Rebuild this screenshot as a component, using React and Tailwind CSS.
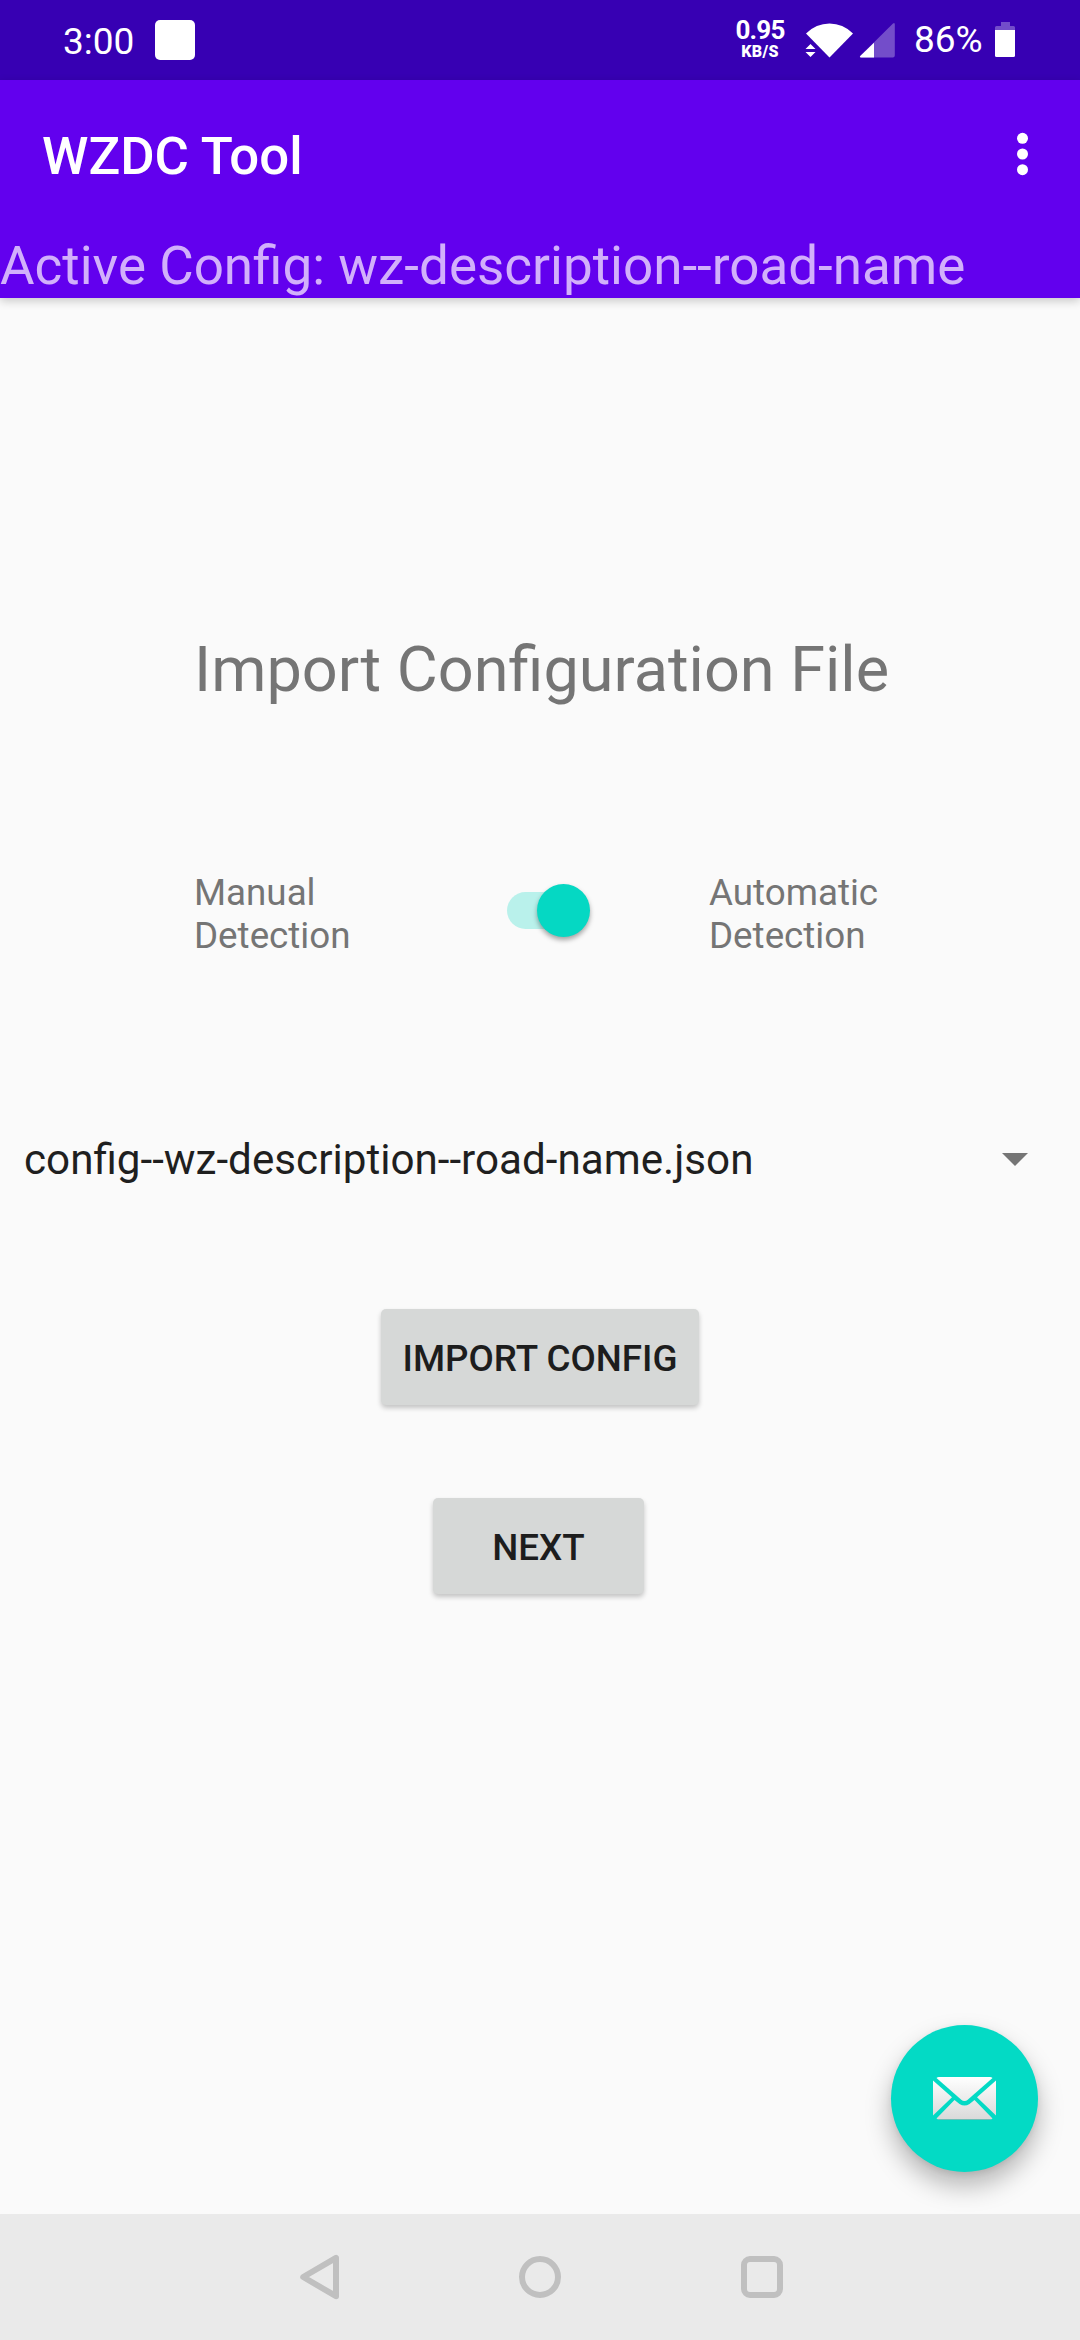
function StatusBar() {
  return (
    <div className="flex h-[80px] items-start bg-[#3700b3] text-white">
      <div className="ml-[63px] mt-[20px] w-[72px] text-[37px] leading-[44px]">3:00</div>
      <div className="ml-[20px] mt-[20px] size-[40px] rounded-[5px] bg-white" />
      <div className="ml-auto mr-[19px] mt-[20px] flex w-[52px] flex-col items-center font-bold">
        <span className="text-[26px] leading-[21px] tracking-[-0.8px]">0.95</span>
        <span className="mt-[1px] text-[16px] font-black leading-[19px] tracking-[0.3px]">KB/S</span>
      </div>
      <svg className="h-[80px] w-[93px]" viewBox="805 0 93 80" fill="#fff">
        <path d="M829.5 57.500L806 33.500Q816 23.500 829.500 23.500T853 33.500Z" />
        <path d="M810.500 44l5 5h-10zM810.500 57l5-5h-10z" />
        <path d="M893 23.500q1.800-1.500 1.800 1V55.500q0 2-2 2H861q-2-.3-.5-1.800z" fillOpacity=".3" />
        <path d="M874 42.700V57.500H861q-2-.3-.5-1.800z" />
      </svg>
      <div className="ml-[16px] mt-[18px] w-[70px] text-[37px] leading-[44px]">86%</div>
      <svg className="ml-[9px] mr-[63px] h-[80px] w-[24px]" viewBox="993 0 24 80" fill="#fff">
        <path d="M995 30v-2.500q0-1.500 1.500-1.500H1001v-4h9v4h3.500q1.500 0 1.500 1.500V30z" fillOpacity=".3" />
        <path d="M995 30h20v25.500q0 1.500-1.500 1.500h-17q-1.500 0-1.500-1.500z" />
      </svg>
    </div>
  );
}

function AppBar() {
  return (
    <header className="relative h-[218px] bg-[#6200ee] shadow-[0_3px_9px_rgba(0,0,0,0.2)]">
      <div className="flex h-[147px] items-center justify-between pl-[42px] pr-[51px]">
        <h1 className="pt-[5px] text-[52.7px] font-medium leading-[62px] text-white">WZDC Tool</h1>
        <svg className="h-[44px] w-[13px]" viewBox="0 0 13 44" fill="#fff">
          <circle cx="6.500" cy="6.300" r="5.500" />
          <circle cx="6.500" cy="22" r="5.500" />
          <circle cx="6.500" cy="37.700" r="5.500" />
        </svg>
      </div>
      <div className="whitespace-nowrap pt-[8px] text-[53px] leading-[62px] text-[#d2b0fb]">
        Active Config: wz-description--road-name
      </div>
    </header>
  );
}

function DetectionSwitch() {
  return (
    <div className="ml-[143px] mt-[13px] flex h-[53px] w-[83px] items-center">
      <div className="h-[37px] w-[80px] shrink-0 rounded-full bg-[#b9f1eb]" />
      <div className="-ml-[50px] size-[53px] shrink-0 rounded-full bg-[#05d8c3] shadow-[0_3px_5px_rgba(0,0,0,0.35)]" />
    </div>
  );
}

function MailButton() {
  return (
    <button className="absolute bottom-[42px] right-[42px] flex size-[147px] items-center justify-center rounded-full bg-[#03dac5] shadow-[0_14px_26px_rgba(0,0,0,0.28),0_2px_6px_rgba(0,0,0,0.08)]">
      <svg className="h-[44px] w-[63px]" viewBox="0 0 63 44">
        <defs>
          <linearGradient id="paper" x1="0" y1="0" x2="0" y2="44" gradientUnits="userSpaceOnUse">
            <stop offset="0" stopColor="#fff" />
            <stop offset="1" stopColor="#d8d8d8" />
          </linearGradient>
        </defs>
        <g fill="#000" opacity=".25" transform="translate(0 1)">
          <path d="M5 42h53l-17-18q-5 4.500-9.500 4.500T22 24z" />
        </g>
        <g fill="url(#paper)">
          <path d="M3.500 1q1-1 2.500-1h51q1.500 0 2.500 1L35 22.500q-3.500 3-7 0z" />
          <path d="M0 3.500L19 20.300 0 38.500zM63 3.500L44 20.300 63 38.500z" />
          <path d="M3.500 41.500L21.500 23l5 4q5 3 10 0l5-4 18 18.500q-1 1-2.500 1H6q-1.500 0-2.500-1z" />
        </g>
      </svg>
    </button>
  );
}

function NavigationBar() {
  return (
    <nav className="flex h-[126px] items-center bg-[#eaeaea] pl-[300px]">
      <svg className="h-[46px] w-[40px]" viewBox="0 0 40 46" fill="none" stroke="#c0c0c0" strokeWidth="6" strokeLinejoin="round">
        <path d="M36 3.800v38.400L3.200 23z" />
      </svg>
      <div className="ml-[179px] size-[42px] rounded-full border-[6px] border-[#c0c0c0]" />
      <div className="ml-[180px] size-[42px] rounded-[9px] border-[6px] border-[#c0c0c0]" />
    </nav>
  );
}

export default function App() {
  return (
    <div className="flex h-[2340px] w-[1080px] flex-col overflow-hidden bg-[#fafafa] font-['Roboto',sans-serif]">
      <StatusBar />
      <AppBar />
      <main className="relative flex flex-1 flex-col">
        <h2 className="ml-[194px] mt-[330px] whitespace-nowrap text-[63px] leading-[84px] text-[#757575]">
          Import Configuration File
        </h2>
        <div className="ml-[194px] mt-[159px] flex h-[86px] text-[36.75px] leading-[43px] text-[#757575]">
          <div className="w-[170px]">Manual Detection</div>
          <DetectionSwitch />
          <div className="ml-[119px] w-[180px]">Automatic Detection</div>
        </div>
        <div className="mt-[171px] flex h-[64px] items-center justify-between pl-[24px] pr-[52px] text-[42.2px] leading-[64px] text-[#1f1f1f]">
          <span>config--wz-description--road-name.json</span>
          <svg className="mb-[2px] h-[13px] w-[26px]" viewBox="0 0 26 13" fill="#757575">
            <path d="M0 0h26L13 13z" />
          </svg>
        </div>
        <button className="ml-[381px] mt-[117px] h-[96px] w-[318px] rounded-[5px] bg-[#d6d8d7] pt-[4px] text-[36.75px] font-medium text-[#1d1d1d] shadow-[0_3px_5px_rgba(0,0,0,0.22)]">
          IMPORT CONFIG
        </button>
        <button className="ml-[433px] mt-[93px] h-[96px] w-[211px] rounded-[5px] bg-[#d6d8d7] pt-[4px] text-[36.75px] font-medium text-[#1d1d1d] shadow-[0_3px_5px_rgba(0,0,0,0.22)]">
          NEXT
        </button>
        <MailButton />
      </main>
      <NavigationBar />
    </div>
  );
}
